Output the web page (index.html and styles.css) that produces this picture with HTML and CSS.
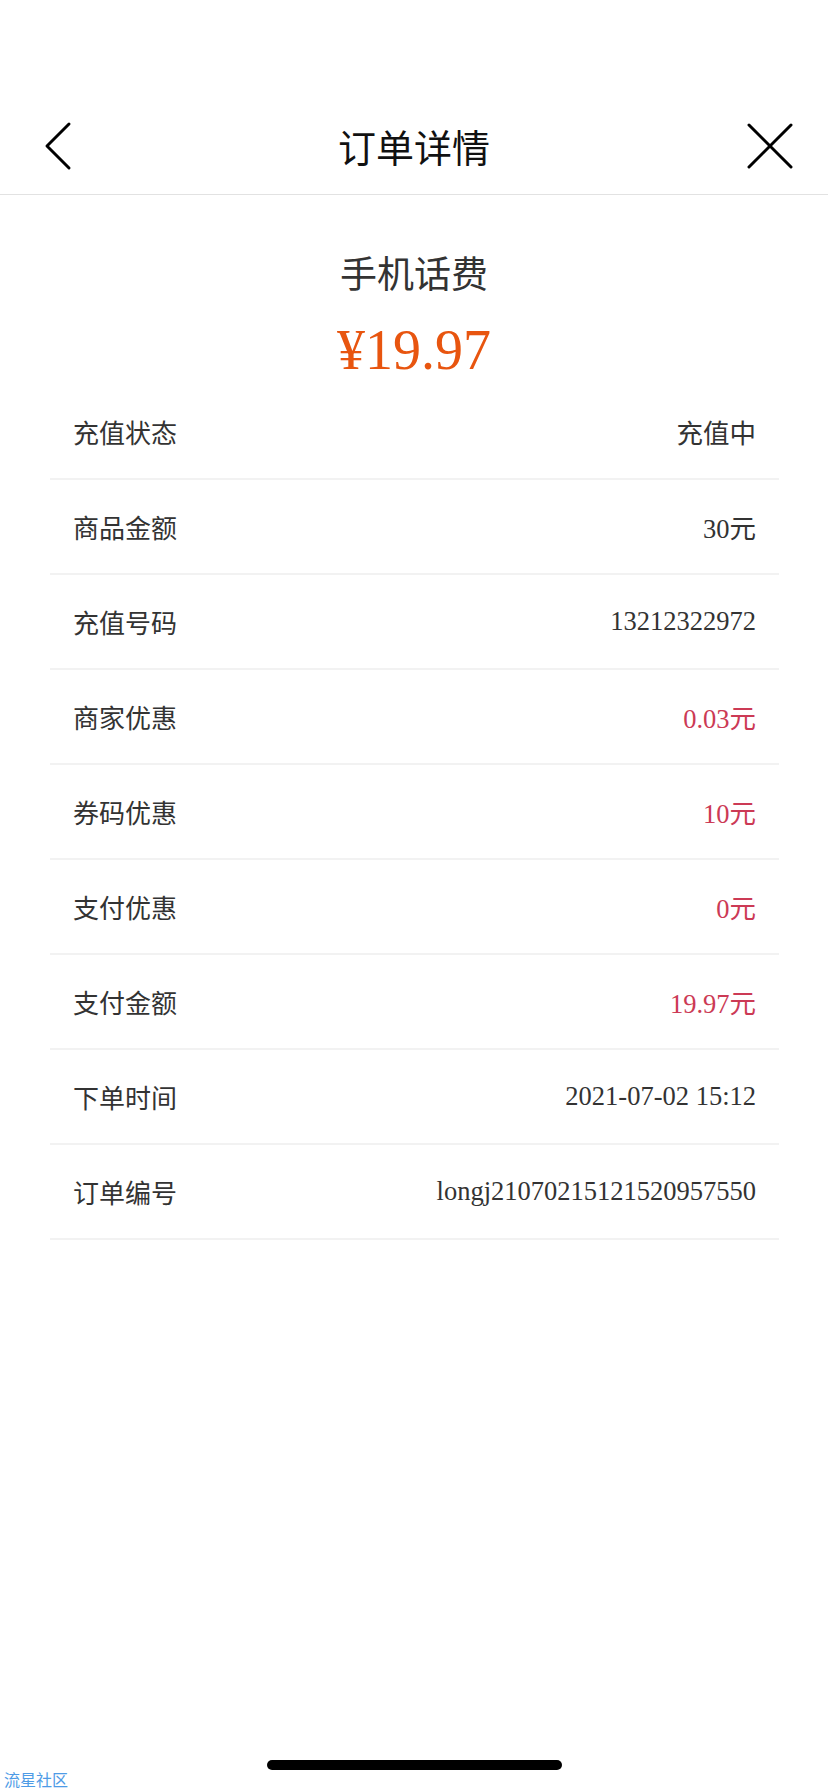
FILE: index.html
```html
<!doctype html>
<html>
<head>
<meta charset="UTF-8">
<title>订单详情</title>
<link rel="stylesheet" href="styles.css">
</head>
<body>

<div class="page">
   <div class="status-bar"></div>

   <div class="nav-bar">
      <a class="nav-btn nav-back">
         <svg width="30" height="50" viewBox="0 0 30 50">
            <polyline points="26,3 4,25 26,47" fill="none" stroke="#000" stroke-width="3" stroke-linecap="round" stroke-linejoin="round" />
         </svg>
      </a>
      <h1 class="nav-title">订单详情</h1>
      <a class="nav-btn nav-close">
         <svg width="48" height="48" viewBox="0 0 48 48">
            <line x1="3" y1="3" x2="45" y2="45" stroke="#000" stroke-width="3" stroke-linecap="round" />
            <line x1="45" y1="3" x2="3" y2="45" stroke="#000" stroke-width="3" stroke-linecap="round" />
         </svg>
      </a>
   </div>

   <div class="summary">
      <h2 class="product-name">手机话费</h2>
      <p class="price">¥19.97</p>
   </div>

   <!-- order detail rows -->
   <ul class="detail-list">
      <li class="detail-row"><span class="label">充值状态</span><span class="value">充值中</span></li>
      <li class="detail-row"><span class="label">商品金额</span><span class="value">30元</span></li>
      <li class="detail-row"><span class="label">充值号码</span><span class="value">13212322972</span></li>
      <li class="detail-row"><span class="label">商家优惠</span><span class="value discount">0.03元</span></li>
      <li class="detail-row"><span class="label">券码优惠</span><span class="value discount">10元</span></li>
      <li class="detail-row"><span class="label">支付优惠</span><span class="value discount">0元</span></li>
      <li class="detail-row"><span class="label">支付金额</span><span class="value discount">19.97元</span></li>
      <li class="detail-row"><span class="label">下单时间</span><span class="value">2021-07-02 15:12</span></li>
      <li class="detail-row"><span class="label">订单编号</span><span class="value">longj21070215121520957550</span></li>
   </ul>

   <div class="filler"></div>

   <div class="home-area">
      <div class="home-indicator"></div>
   </div>
   <p class="watermark">流星社区</p>
</div>

</body>
</html>
```

FILE: styles.css
```css
body, div, h1, h2, p, ul, li, a {
   margin: 0;
   padding: 0;
   border: 0;
}

body {
   background: #FFFFFF;
   color: #333333;
   font-family: "Noto Sans CJK SC", "Noto Sans", sans-serif;
}

.page {
   width: 828px;
   height: 1792px;
   display: flex;
   flex-direction: column;
   overflow: hidden;
}

.status-bar {
   height: 98px;
}

.nav-bar {
   height: 96px;
   display: grid;
   grid-template-columns: 1fr auto 1fr;
   align-items: center;
   padding: 0 34px 0 43px;
   border-bottom: 1px solid #E2E2E2;
}

.nav-btn {
   display: flex;
   align-items: center;
}

.nav-back {
   justify-content: flex-start;
}

.nav-close {
   justify-content: flex-end;
}

.nav-title {
   font-size: 38px;
   font-weight: 400;
   line-height: 50px;
   color: #111111;
   margin-left: -9px;
}

.summary {
   display: flex;
   flex-direction: column;
   align-items: center;
   padding-top: 52px;
}

.product-name {
   font-size: 37px;
   font-weight: 400;
   line-height: 50px;
   color: #333333;
}

.price {
   margin-top: 21px;
   font-family: "Liberation Serif", serif;
   font-size: 56px;
   line-height: 64px;
   color: #E8550F;
}

.detail-list {
   list-style: none;
   margin: 3px 49px 0 50px;
}

.detail-row {
   height: 93px;
   display: flex;
   align-items: center;
   justify-content: space-between;
   padding: 0 23px;
   border-bottom: 2px solid #F2F2F2;
}

.label {
   font-size: 26px;
   color: #333333;
}

.value {
   font-family: "Liberation Serif", "Noto Sans CJK SC", serif;
   font-size: 26.5px;
   color: #333333;
}

.discount {
   color: #CC3A55;
}

.filler {
   flex: 1;
}

.home-area {
   display: flex;
   justify-content: center;
}

.home-indicator {
   width: 295px;
   height: 10px;
   border-radius: 5px;
   background: #000000;
}

.watermark {
   height: 20px;
   padding: 0 0 2px 4px;
   font-size: 16px;
   line-height: 18px;
   color: #4E9BE6;
}
```
